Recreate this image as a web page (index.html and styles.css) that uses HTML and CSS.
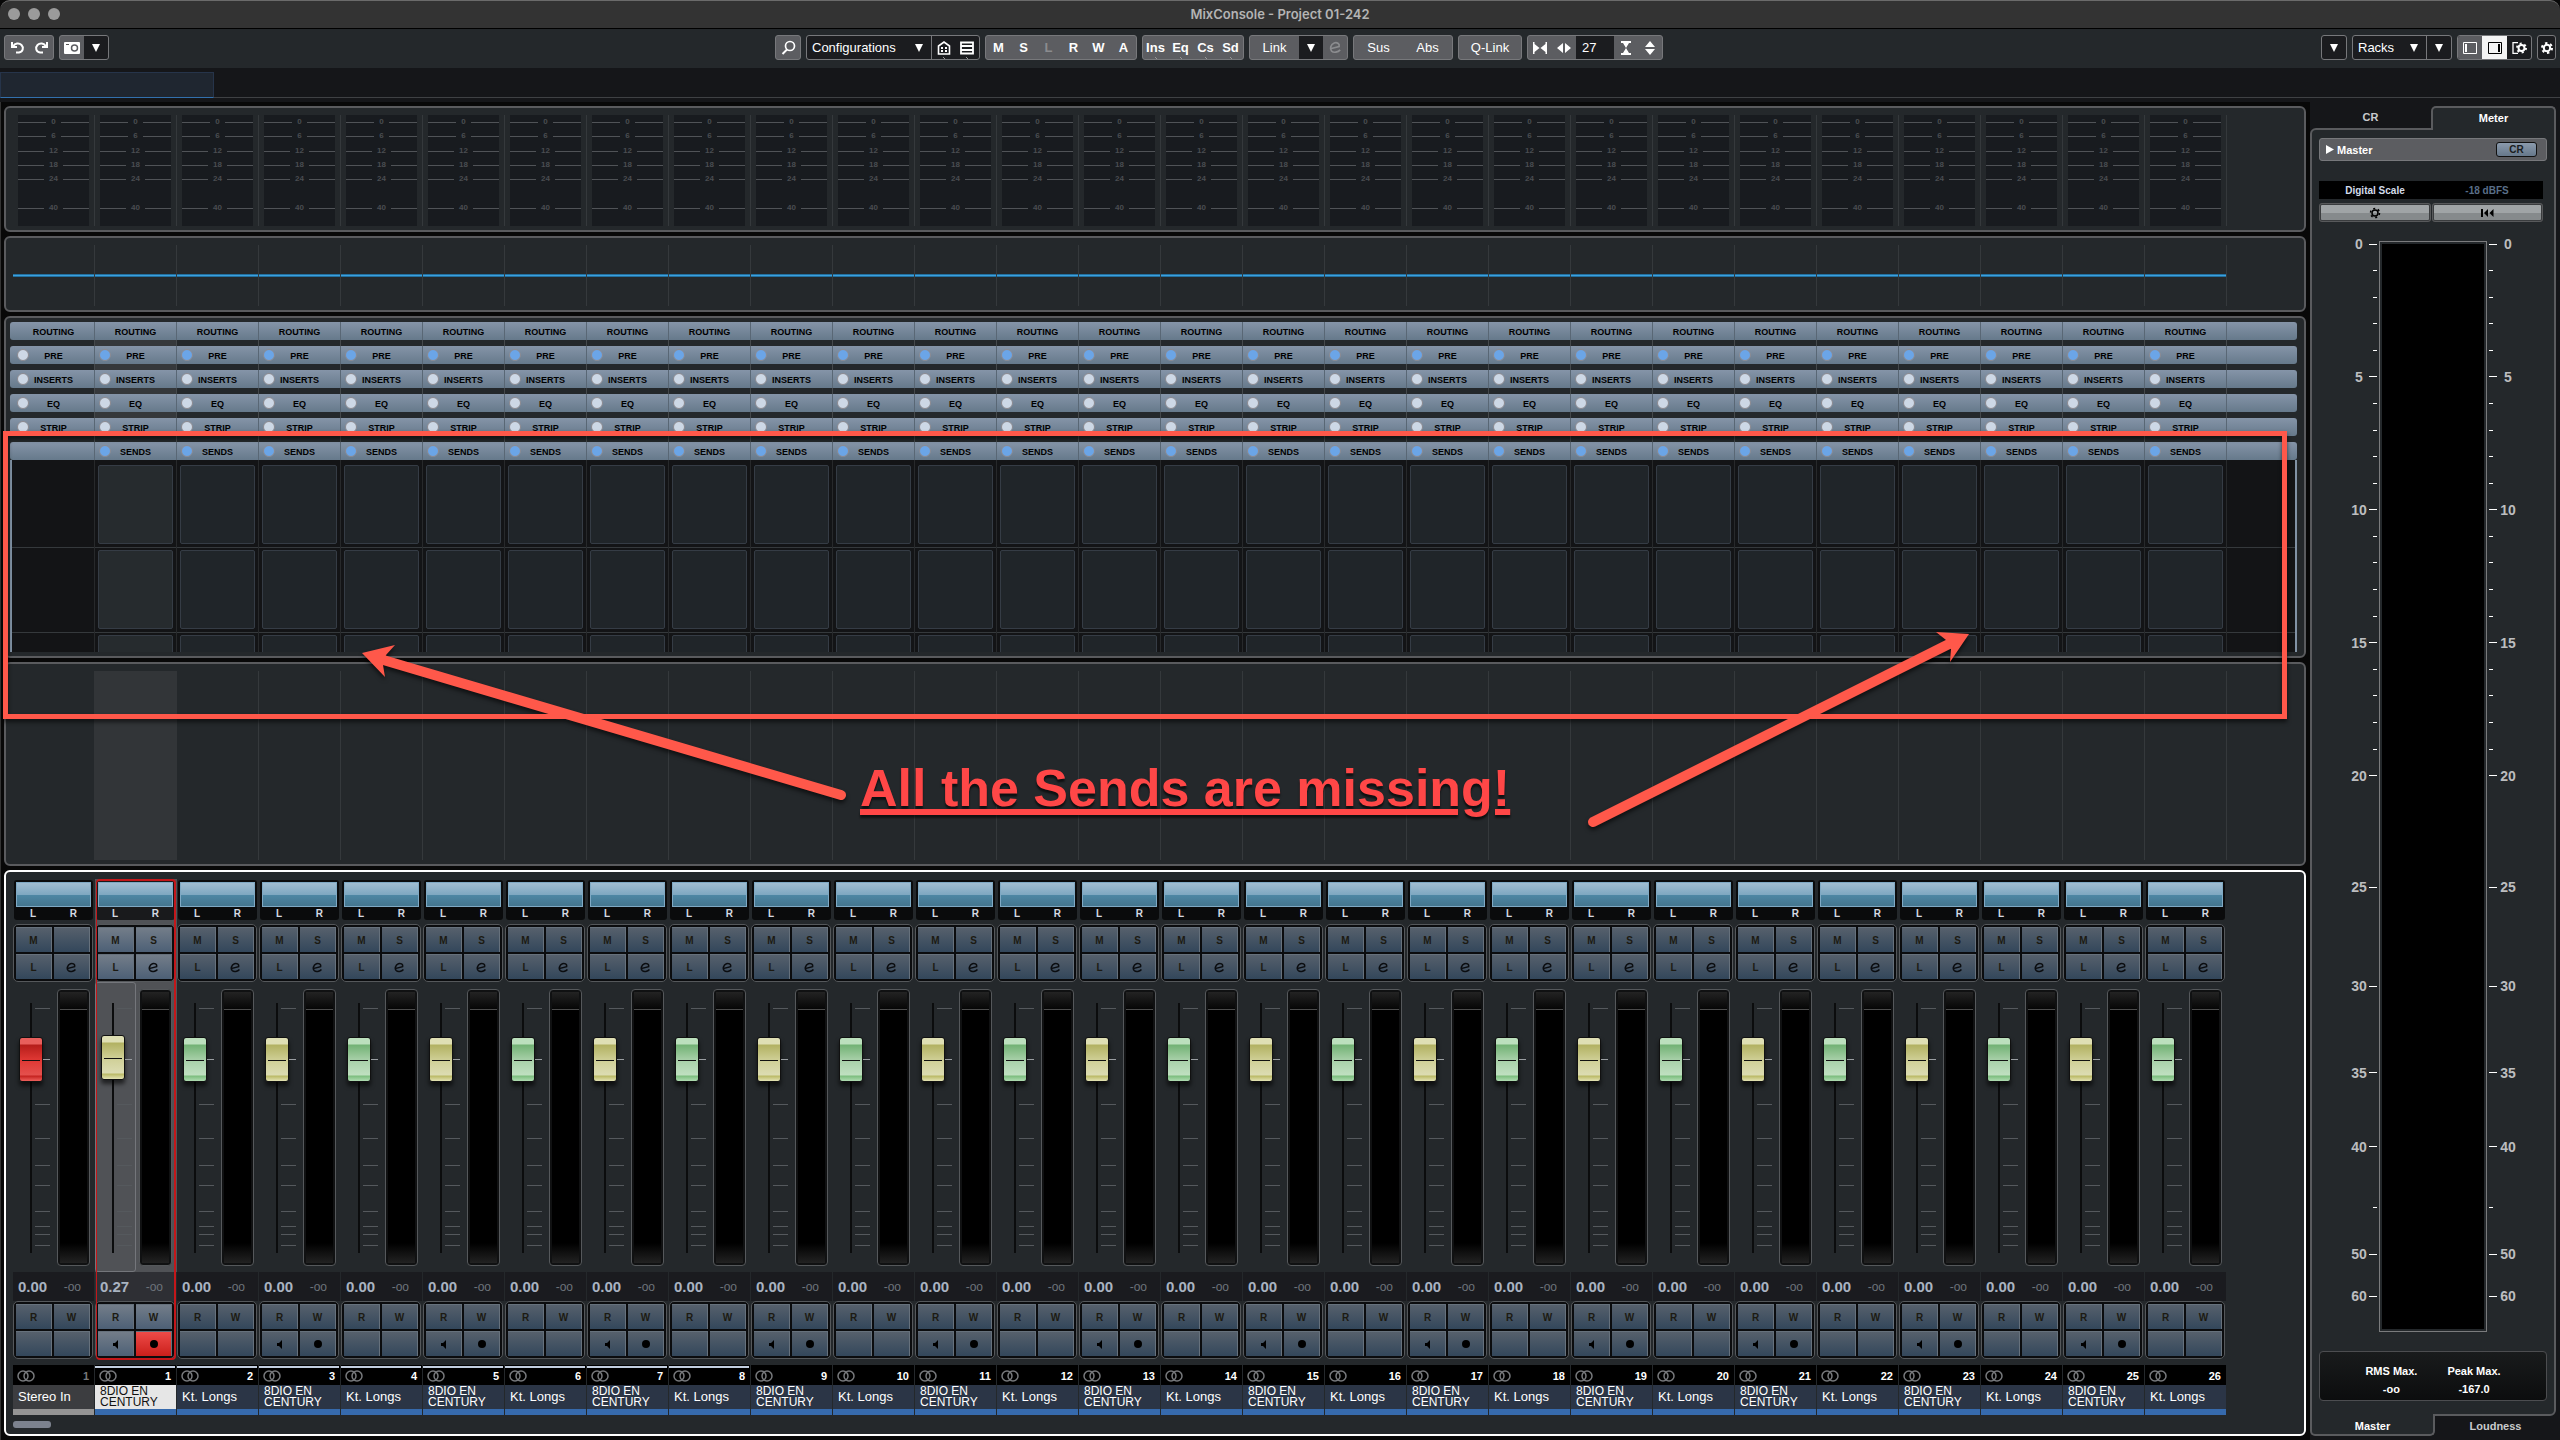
FILE: index.html
```
<!DOCTYPE html>
<html lang="en">
<head>
<meta charset="UTF-8">
<meta name="viewport" content="width=device-width, initial-scale=1.0">
<title>MixConsole - Project 01-242</title>
<link rel="stylesheet" href="styles.css">
</head>
<body>
<div class="window">
    <header class="titlebar">
        <div class="lights"><i></i><i></i><i></i></div>
        <h1>MixConsole - Project 01-242</h1>
    </header>

    <div class="toolbar">
        <div class="tools">
            <div class="group">
                <button class="w24" aria-label="Undo"><svg width="15" height="14" viewBox="0 0 15 14"><path d="M2 1v5h5M3 5.500C5 2 9 1.500 11.500 4S13 11 9 11.500H6" fill="none" stroke="#fff" stroke-width="2"/></svg></button>
                <button class="w24" aria-label="Redo"><svg width="15" height="14" viewBox="0 0 15 14"><path d="M13 1v5H8M12 5.500C10 2 6 1.500 3.500 4S2 11 6 11.500h3" fill="none" stroke="#fff" stroke-width="2"/></svg></button>
            </div>
            <div class="group">
                <button class="w24" aria-label="Snapshots"><svg width="16" height="12" viewBox="0 0 16 12"><rect width="16" height="12" rx="1" fill="#fff"/><rect x="2" y="2" width="3" height="1" fill="#555"/><circle cx="10.500" cy="6" r="3" fill="none" stroke="#5c5d61" stroke-width="1.500"/></svg></button>
                <button class="w24 dark" aria-label="Snapshot menu"><svg class="down" viewBox="0 0 8 8"><path d="M0 0h8L4 8z"/></svg></button>
            </div>
        </div>

        <div class="tools center">
            <div class="group">
                <button class="w24" aria-label="Find channel"><svg width="15" height="15" viewBox="0 0 15 15"><circle cx="9" cy="6" r="4.500" fill="none" stroke="#fff" stroke-width="1.700"/><path d="M6 9.500L1.500 14" stroke="#fff" stroke-width="2"/></svg></button>
            </div>
            <div class="group dark">
                <label class="drop w124">
                    <select aria-label="Configurations"><option>Configurations</option></select>
                    <svg class="down" viewBox="0 0 8 8"><path d="M0 0h8L4 8z"/></svg>
                </label>
                <button class="w24 split notch" aria-label="Channel types"><svg width="14" height="14" viewBox="0 0 14 14"><path d="M1.500 13V5L7 1l5.500 4v8z" fill="none" stroke="#fff" stroke-width="1.600"/><path d="M4 6h2v2H4zM8 6h2v2H8zM4 9h2v2H4zM8 9h2v2H8z" fill="#fff"/></svg></button>
                <button class="w24 notch" aria-label="Zones"><svg width="14" height="14" viewBox="0 0 14 14"><path d="M1 1.500h12v11H1zM1 5h12M1 9h12" fill="none" stroke="#fff" stroke-width="1.800"/></svg></button>
            </div>
            <div class="group bold">
                <button class="w25">M</button><button class="w25">S</button><button class="w25 off">L</button><button class="w25">R</button><button class="w25">W</button><button class="w25">A</button>
            </div>
            <div class="group bold">
                <button class="w25 notch">Ins</button><button class="w25 notch">Eq</button><button class="w25 notch">Cs</button><button class="w25 notch">Sd</button>
            </div>
            <div class="group">
                <button class="w49">Link</button>
                <button class="w24 dark" aria-label="Link options"><svg class="down" viewBox="0 0 8 8"><path d="M0 0h8L4 8z"/></svg></button>
                <button class="w24 off" aria-label="Suspend link"><svg width="13" height="13" viewBox="0 0 10 10"><path d="M1.800 5.800L7.800 4.200C8.400 2 6 .8 4 1.600 1.200 2.800.4 6 2 7.800 3.600 9.400 7 8.600 8.600 6.800" fill="none" stroke="#8b8c8f" stroke-width="1.300"/></svg></button>
            </div>
            <div class="group">
                <button class="w49">Sus</button><button class="w49">Abs</button>
            </div>
            <div class="group">
                <button class="w62">Q-Link</button>
            </div>
            <div class="group">
                <button class="w24" aria-label="Narrow channels"><svg width="14" height="12" viewBox="0 0 14 12"><path d="M0 0h1.500v2l5 4-5 4v2H0zM14 0h-1.500v2l-5 4 5 4v2H14z" fill="#fff"/></svg></button>
                <button class="w24" aria-label="Widen channels"><svg width="14" height="10" viewBox="0 0 14 10"><path d="M6 0v10L0 5zM8 0v10l6-5z" fill="#fff"/></svg></button>
                <input class="count" type="text" value="27" aria-label="Visible channels">
                <button class="w24" aria-label="Less height"><svg width="10" height="14" viewBox="0 0 10 14"><path d="M0 0h10v2H8L5 7 2 2H0zM0 14h10v-2H8L5 7l-3 5H0z" fill="#fff"/></svg></button>
                <button class="w24" aria-label="More height"><svg width="10" height="14" viewBox="0 0 10 14"><path d="M0 6h10L5 0zM0 8h10l-5 6z" fill="#fff"/></svg></button>
            </div>
        </div>

        <div class="tools">
            <div class="group dark">
                <button class="w24" aria-label="Functions menu"><svg class="down" viewBox="0 0 8 8"><path d="M0 0h8L4 8z"/></svg></button>
            </div>
            <div class="group dark">
                <label class="drop w73">
                    <select aria-label="Racks"><option>Racks</option></select>
                    <svg class="down" viewBox="0 0 8 8"><path d="M0 0h8L4 8z"/></svg>
                </label>
                <button class="w25 split" aria-label="Rack menu"><svg class="down" viewBox="0 0 8 8"><path d="M0 0h8L4 8z"/></svg></button>
            </div>
            <div class="group dark">
                <button class="w24 grey" aria-label="Left zone"><svg width="14" height="12" viewBox="0 0 14 12"><path d="M.5.5h13v11H.5z" fill="none" stroke="#fff"/><path d="M2 2h2v8H2z" fill="#fff"/></svg></button>
                <button class="w25 lit" aria-label="Right zone"><svg width="14" height="12" viewBox="0 0 14 12"><path d="M.5.5h13v11H.5z" fill="none" stroke="#000"/><path d="M10 2h2v8h-2z" fill="#000"/></svg></button>
                <button class="w24" aria-label="Window layout"><svg width="15" height="12" viewBox="0 0 15 12"><path d="M6 .5H1v11h5" fill="none" stroke="#fff" stroke-width="1.300"/><circle cx="9.500" cy="6" r="3" fill="none" stroke="#fff" stroke-width="2"/><circle cx="9.500" cy="6" r="4.500" fill="none" stroke="#fff" stroke-width="2" stroke-dasharray="2 2.710"/></svg></button>
            </div>
            <div class="group dark">
                <button class="w17" aria-label="Toolbar setup"><svg width="12" height="12" viewBox="0 0 12 12"><circle cx="6" cy="6" r="3.200" fill="none" stroke="#fff" stroke-width="2"/><circle cx="6" cy="6" r="5" fill="none" stroke="#fff" stroke-width="2" stroke-dasharray="2.400 2.836"/></svg></button>
            </div>
        </div>
    </div>

    <div class="overview"><div class="visible-range"></div></div>

    <main class="main">
        <div class="console">
            <section class="panel meters" id="meters"></section>
            <section class="panel curves"><div class="lanes" id="curves"></div></section>
            <section class="panel rack" id="rack"></section>
            <section class="panel pictures"><div class="lanes marked"></div></section>
            <section class="panel faders">
                <div class="channels" id="channels"></div>
                <div class="scroll"></div>
            </section>
        </div>

        <aside class="side">
            <div class="tabs">
                <button>CR</button><button class="active">Meter</button>
            </div>
            <div class="side-body">
                <div class="master">
                    <svg width="8" height="9" viewBox="0 0 8 9"><path d="M0 0l8 4.500L0 9z" fill="#fff"/></svg>
                    <span>Master</span>
                    <button>CR</button>
                </div>
                <div class="scale-info"><span>Digital Scale</span><span class="dim">-18 dBFS</span></div>
                <div class="scale-buttons">
                    <button aria-label="Meter settings"><svg width="12" height="12" viewBox="0 0 12 12"><circle cx="6" cy="6" r="3" fill="none" stroke="#000" stroke-width="1.500"/><circle cx="6" cy="6" r="4.500" fill="none" stroke="#000" stroke-width="1.500" stroke-dasharray="2 2.712"/></svg></button>
                    <button aria-label="Reset meter"><svg width="13" height="8" viewBox="0 0 13 8"><path d="M0 0h2v8H0zM7 0v8L3 4zM12.500 0v8l-4-4z"/></svg></button>
                </div>
                <div class="big-meter">
                    <div class="scale left" id="scaleLeft"></div>
                    <div class="bar"></div>
                    <div class="scale right" id="scaleRight"></div>
                </div>
                <dl class="stats">
                    <div><dt>RMS Max.</dt><dd>-oo</dd></div>
                    <div><dt>Peak Max.</dt><dd>-167.0</dd></div>
                </dl>
            </div>
            <div class="tabs bottom">
                <button class="active">Master</button><button>Loudness</button>
            </div>
        </aside>
    </main>

    <div class="notes">
        <svg viewBox="0 0 2560 1440">
            <rect x="5.500" y="433.500" width="2279" height="283" fill="none" stroke="#ff584a" stroke-width="5"/>
            <path d="M841 795L380 659" stroke="#ff584a" stroke-width="10" stroke-linecap="round"/>
            <path d="M362 653l33-8-9 10-3 10 2 12z" fill="#ff584a"/>
            <path d="M1593 822l356-178" stroke="#ff584a" stroke-width="10" stroke-linecap="round"/>
            <path d="M1969 634l-33-2 10 8 5 9-1 13z" fill="#ff584a"/>
        </svg>
        <p>All the Sends are missing!</p>
    </div>
</div>

<script src="script.js"></script>
</body>
</html>
```
FILE: styles.css
```
* {
    box-sizing: border-box;
}

body {
    margin: 0;
    background-color: #080808;
    color: #fff;
    font-family: "Liberation Sans", Arial, sans-serif;
    font-size: 13px;
}

button, input, select {
    margin: 0;
    padding: 0;
    border: none;
    background: none;
    color: inherit;
    font: inherit;
}

svg {
    display: block;
}

.window {
    position: relative;
    display: flex;
    flex-direction: column;
    height: 100vh;
    min-height: 1300px;
    overflow: hidden;
}

/* title bar */
.titlebar {
    display: flex;
    align-items: center;
    height: 29px;
    padding: 0 8px 2px;
    border-top: 1px solid #6b6b6b;
    border-bottom: 1px solid #000;
    border-radius: 10px 10px 0 0;
    background-color: #333;
}

.lights {
    display: flex;
    flex: 1;
    gap: 8px;
}

.lights i {
    width: 12px;
    height: 12px;
    border-radius: 50%;
    background-color: #9b9b9b;
}

.titlebar h1 {
    margin: 0;
    color: #b4b4b4;
    font: 600 13px/16px Inter, "Liberation Sans", sans-serif;
}

.titlebar::after {
    content: "";
    flex: 1;
}

/* toolbar */
.toolbar {
    display: flex;
    align-items: center;
    justify-content: space-between;
    height: 39px;
    padding: 0 4px 2px;
    background-color: #24282b;
}

.tools {
    display: flex;
    gap: 5px;
}

.center {
    padding-left: 8px;
}

.group {
    display: flex;
    height: 25px;
    overflow: hidden;
    border: 1px solid #77787b;
    border-radius: 3px;
    background-color: #5c5d61;
}

.group button {
    display: flex;
    align-items: center;
    justify-content: center;
}

.bold {
    font-weight: bold;
}

.w17 { width: 17px; }
.w24 { width: 24px; }
.w25 { width: 25px; }
.w49 { width: 49px; }
.w62 { width: 62px; }
.w73 { width: 73px; }
.w124 { width: 124px; }

.dark {
    background-color: #1b1c1f;
}

.group .grey {
    background-color: #5c5d61;
}

.group .lit {
    background-color: #f4f4f4;
}

.off {
    color: #8b8c8f;
}

.split {
    border-left: 1px solid #77787b;
}

.notch {
    background-image: linear-gradient(45deg, transparent 45%, #999 50%, transparent 55%);
    background-repeat: no-repeat;
    background-position: center bottom;
    background-size: 4px 2px;
}

.down {
    width: 8px;
    height: 8px;
    fill: #fff;
}

.drop {
    display: flex;
    align-items: center;
    padding: 0 8px 0 5px;
}

.drop select {
    flex: 1;
    min-width: 0;
    appearance: none;
}

.count {
    width: 38px;
    padding-left: 6px;
    background-color: #1b1c1f;
}

.overview {
    height: 34px;
    padding-top: 4px;
    background: linear-gradient(#3f4144, #3f4144) 0 29px / 100% 1px no-repeat #151619;
}

.visible-range {
    width: 214px;
    height: 26px;
    border: 1px solid #26344a;
    border-bottom-color: #3270ad;
    background-color: #1f2630;
}

/* console panels */
.main {
    display: flex;
    flex: 1;
    min-height: 0;
}

.console {
    display: flex;
    flex: 1;
    flex-direction: column;
    gap: 4px;
    min-width: 0;
    padding: 4px 4px 4px 3px;
    border-left: 1px solid #333;
}

.panel {
    overflow: hidden;
    border: 2px solid #5a5b5e;
    border-radius: 6px;
    background-color: #24282b;
}

.meters {
    display: flex;
    padding: 7px 7px 4px;
}

.mini-meter {
    flex: none;
    display: grid;
    grid-template-rows: 14px 14px 15px 14px 14px 29px 11px;
    width: 82px;
    height: 111px;
    padding-right: 5px;
    padding-left: 5px;
    border-right: 1px solid #35393c;
}

.mini-meter span {
    display: flex;
    align-items: flex-end;
    gap: 5px;
    padding-bottom: 1px;
    background-color: #181b1f;
    color: #4a4d51;
    font-weight: bold;
    font-size: 8px;
    line-height: 13px;
}

.mini-meter span:not(:empty)::before,
.mini-meter span:not(:empty)::after {
    content: "";
    flex: 1;
    height: 1px;
    margin-bottom: 5px;
    background-color: #505357;
}

.lanes {
    width: 2214px;
    background: repeating-linear-gradient(90deg, transparent 0 81px, #35393c 81px 82px);
}

.curves {
    padding: 7px 7px 4px;
}

.curves .lanes {
    display: flex;
    align-items: center;
    height: 61px;
}

.curves i {
    width: 81px;
    height: 3px;
    margin-right: 1px;
    border: solid #23709f;
    border-width: 1px 0;
    background-color: #3ba0de;
}

.rack {
    flex: none;
    padding: 4px 7px 4px 4px;
}

.rack-rows {
    display: grid;
    gap: 6px;
    background: linear-gradient(#35383b, #35383b) 85px 0 / 81px 100px no-repeat,
        repeating-linear-gradient(90deg, transparent 0 81px, #45494c 81px 82px) 3px 0 / 2214px 100% no-repeat;
}

.row {
    display: flex;
    height: 18px;
    padding-left: 3px;
    border-radius: 3px;
    background: linear-gradient(#8594a8, #66798b);
}

.slot {
    display: grid;
    flex: none;
    align-items: center;
    width: 82px;
    border-right: 1px solid #596775;
    color: #000;
    font-weight: bold;
    font-size: 9px;
}

.slot > * {
    grid-area: 1 / 1;
}

.slot span {
    padding-top: 1px;
    text-align: center;
}

.bypass {
    width: 12px;
    height: 12px;
    margin-left: 4px;
    border: 1px solid #8c8a90;
    border-radius: 50%;
    background-color: #cdd8e6;
}

.bypass.on {
    background-color: #6ba5e7;
}

.sends {
    display: flex;
    height: 192px;
    overflow: hidden;
    padding-left: 1px;
    border: solid #8192a5;
    border-width: 0 2px;
    background: linear-gradient(#35393c, #35393c) 0 87px / 100% 1px no-repeat,
        linear-gradient(#35393c, #35393c) 0 172px / 100% 1px no-repeat,
        #131416;
}

.send-col {
    flex: none;
    width: 82px;
    padding: 5px 3px;
    border-right: 1px solid #27292b;
}

.send-col button {
    display: block;
    width: 75px;
    height: 79px;
    margin-bottom: 6px;
    border: 1px solid #353c45;
    border-radius: 2px;
    background-color: #202529;
}

.send-col.selected button {
    background-color: #262b2e;
}

.pictures {
    flex: 1;
    padding: 7px 7px 4px;
}

.pictures .lanes {
    height: 100%;
}

.marked {
    background: linear-gradient(#323538, #323538) 81px 0 / 83px 100% no-repeat,
        repeating-linear-gradient(90deg, transparent 0 81px, #35393c 81px 82px);
}

/* fader section */
.faders {
    flex: none;
    padding: 7px 7px 6px;
    border-color: #fff;
}

.channels {
    display: flex;
    height: 536px;
}

.channel {
    position: relative;
    display: flex;
    flex: none;
    flex-direction: column;
    width: 82px;
}

.pan {
    height: 40px;
    margin: 1px 2px 4px 1px;
    padding: 2px;
    border-radius: 3px;
    background-color: #0a0b0c;
}

.pan-bar {
    height: 25px;
    border: 1px solid #7fa9c4;
    background: linear-gradient(#a0bdd2, #7fa8c1 50%, #4d86a3 54%, #44758e);
}

.pan-text {
    display: flex;
    justify-content: space-between;
    padding: 1px 14px 0;
    color: #d5dae2;
    font-weight: bold;
    font-size: 10px;
    line-height: 11px;
}

.pads {
    display: grid;
    grid-template-columns: 1fr 1fr;
    grid-template-rows: 1fr 1fr;
    gap: 2px;
    width: 80px;
    height: 58px;
    padding: 2px;
    border: 1px solid #55585b;
    border-radius: 5px;
    background-color: #0b0c0e;
}

.pads button {
    display: flex;
    align-items: center;
    justify-content: center;
    border: solid #66717c;
    border-width: 1px 1px 0 0;
    background: linear-gradient(#56606c, #33475b);
    color: #1c1a12;
    font-weight: bold;
    font-size: 10px;
}

.fader-area {
    display: flex;
    flex: 1;
    min-height: 0;
}

.fader {
    display: flex;
    width: 41px;
    padding: 21px 0 19px 6px;
}

.fader input {
    flex: none;
    width: 24px;
    height: 250px;
    appearance: none;
    writing-mode: vertical-lr;
    direction: rtl;
    background: linear-gradient(#0b0c0d, #0b0c0d) center / 2px 100% no-repeat;
}

.fader input::-webkit-slider-thumb {
    width: 24px;
    height: 45px;
    appearance: none;
    border: 1px solid #111;
    border-radius: 3px;
    box-shadow: 0 4px 4px rgba(0, 0, 0, 0.6);
    background: linear-gradient(#111, #111) center 22px / 18px 1px no-repeat,
        linear-gradient(#bce0bd 0 6px, #72b274 7px, #a8d0a9 22px, #bfe0c0 37px, #7bbd7d 38px, #b0dcb2);
}

.fader.gold input::-webkit-slider-thumb {
    background: linear-gradient(#111, #111) center 22px / 18px 1px no-repeat,
        linear-gradient(#dfdfb4 0 6px, #b2b161 7px, #cfcf96 22px, #dcdcb2 37px, #bab965 38px, #e3e3b4);
}

.fader.red input::-webkit-slider-thumb {
    background: linear-gradient(#111, #111) center 22px / 18px 1px no-repeat,
        linear-gradient(#e85f5c 0 6px, #b51d1a 7px, #e03834 22px, #e4504d 37px, #c3211e 38px, #ef605c);
}

.fader svg {
    flex: none;
    width: 7px;
    height: 250px;
    overflow: visible;
    fill: #55595d;
}

.fader .unity {
    fill: #9a9ea2;
}

.level {
    width: 33px;
    margin: 7px 0 6px 3px;
    padding: 2px;
    border: 1px solid #55585b;
    border-radius: 4px;
    background-color: #101112;
}

.level i {
    display: block;
    height: 100%;
    background: linear-gradient(#232323, #060606 17px, #4c4c4c 17px 18px, #000 18px, #000 calc(100% - 20px), #222);
}

.value {
    display: flex;
    align-items: center;
    justify-content: space-between;
    width: 81px;
    height: 29px;
    padding: 0 13px 0 5px;
    background-color: #1a1b1f;
    color: #a9b3c1;
    font-weight: bold;
    font-size: 15px;
}

.value small {
    color: #6d737a;
    font-weight: normal;
    font-size: 12px;
}

.strip-head {
    display: flex;
    align-items: center;
    justify-content: space-between;
    width: 81px;
    height: 20px;
    margin-top: 6px;
    padding: 0 5px 0 4px;
    border-top: 1px solid #000;
    background-color: #000;
    font-weight: bold;
    font-size: 11px;
}

.strip-head.linked {
    background: linear-gradient(#c3cfe0, #c3cfe0) 0 0 / 80px 2px no-repeat #000;
}

.strip-name {
    display: flex;
    align-items: center;
    width: 81px;
    height: 30px;
    padding: 0 0 2px 5px;
    border-bottom: 6px solid #366aad;
    background-color: #2b3546;
    font-size: 13px;
}

.strip-name.two {
    padding-bottom: 0;
    font-size: 12px;
    line-height: 11px;
}

.input .strip-head {
    color: #77797c;
}

.input .strip-name {
    border-color: #949494;
    background-color: #3c3d40;
}

.selected .pan {
    background-color: #191a1c;
}

.selected .pads button {
    background: linear-gradient(#737d89, #4d6076);
}

.selected .pads .armed {
    background: linear-gradient(#ee4b48, #cb1f1b);
}

.channel.selected {
    background: linear-gradient(#505256, #505256) 0 0 / 82px 393px no-repeat;
}

.channel.selected::after {
    content: "";
    position: absolute;
    inset: 0 1px 55px 1px;
    border: 2px solid #c3171a;
    border-left-width: 1px;
    border-radius: 4px;
    pointer-events: none;
}

.selected .fader {
    border: 1px solid #74767b;
    border-radius: 3px;
    padding: 20px 0 18px 5px;
}

.selected .value {
    background-color: #2e2f34;
}

.selected .strip-name {
    background-color: #e6e6e6;
    color: #111;
}

.scroll {
    width: 38px;
    height: 7px;
    margin-top: 6px;
    border-radius: 3px;
    background-color: #7c828e;
}

/* control room side */
.side {
    display: flex;
    flex-direction: column;
    width: 250px;
    padding: 4px 4px 4px 0;
    background-color: #151619;
    font-weight: bold;
    font-size: 11px;
}

.tabs {
    display: flex;
    height: 22px;
}

.tabs button {
    flex: 1;
    color: #c8cacc;
}

.tabs .active {
    z-index: 1;
    margin-bottom: -2px;
    padding-bottom: 2px;
    border: 2px solid #5a5b5e;
    border-bottom: none;
    border-radius: 5px 5px 0 0;
    background-color: #24282b;
    color: #fff;
}

.tabs.bottom {
    height: 20px;
}

.tabs.bottom .active {
    margin-top: -2px;
    margin-bottom: 0;
    padding-top: 4px;
    padding-bottom: 0;
    border-top: none;
    border-bottom: 2px solid #5a5b5e;
    border-radius: 0 0 5px 5px;
}

.side-body {
    display: flex;
    flex: 1;
    flex-direction: column;
    min-height: 0;
    padding: 8px 7px 13px;
    border: 2px solid #5a5b5e;
    border-radius: 6px 0 6px 0;
    background-color: #24282b;
}

.master {
    display: flex;
    align-items: center;
    gap: 3px;
    height: 23px;
    padding: 0 9px 0 6px;
    border: 1px solid #77787b;
    border-radius: 3px;
    background-color: #5c5d61;
}

.master span {
    flex: 1;
}

.master button {
    width: 41px;
    height: 15px;
    border: 1px solid #111;
    border-radius: 3px;
    background: linear-gradient(#8b9aac, #66788b);
    color: #1a1c20;
    font-size: 10px;
    line-height: 13px;
}

.scale-info {
    display: flex;
    height: 18px;
    margin: 20px 4px 4px 0;
    background-color: #000;
    color: #d3dcea;
    font-size: 10px;
    line-height: 19px;
    text-align: center;
}

.scale-info span {
    flex: 1;
}

.scale-info .dim {
    color: #5a6f88;
}

.scale-buttons {
    display: flex;
    gap: 1px;
    margin-right: 4px;
}

.scale-buttons button {
    display: flex;
    flex: 1;
    align-items: center;
    justify-content: center;
    height: 19px;
    border: 2px solid #3a3c3e;
    outline: 1px solid #58595b;
    outline-offset: -1px;
    border-radius: 3px;
    background: linear-gradient(#a0a4a6 50%, #868a8c 55%);
}

.big-meter {
    display: flex;
    flex: 1;
    min-height: 0;
    margin: 19px 0;
}

.bar {
    flex: none;
    width: 108px;
    border: 1px solid #7a7b7d;
    background-color: #000;
    box-shadow: inset 0 0 0 2px #24282b;
}

.scale {
    position: relative;
    flex: 1;
    margin: 3px 2px;
    color: #bcbdbf;
    font-size: 14px;
    line-height: 16px;
}

.mark {
    position: absolute;
    right: 0;
    display: flex;
    align-items: center;
    gap: 2px;
    height: 16px;
    margin-top: -8px;
}

.mark span {
    width: 16px;
    text-align: center;
}

.mark::after {
    content: "";
    width: 4px;
    height: 1px;
    background-color: #fff;
}

.mark.major::after {
    width: 8px;
}

.right .mark {
    right: auto;
    left: 0;
    flex-direction: row-reverse;
    gap: 3px;
}

.stats {
    display: flex;
    justify-content: center;
    gap: 30px;
    height: 50px;
    margin: 0;
    padding-top: 10px;
    border: 1px solid #4c4d50;
    border-radius: 4px;
    background: linear-gradient(#191b1c, #0c0d0e);
    line-height: 18px;
    text-align: center;
}

.stats dd {
    margin: 0;
}

/* marker drawing over the console */
.notes {
    position: absolute;
    inset: 0;
    pointer-events: none;
}

.notes svg {
    width: 100%;
    filter: drop-shadow(0 3px 2px rgba(0, 0, 0, 0.6));
}

.notes p {
    position: absolute;
    top: 758px;
    left: 860px;
    margin: 0;
    color: #ff4747;
    font-weight: bold;
    font-size: 52px;
    line-height: 60px;
    text-decoration: underline 6px;
    text-shadow: 0 3px 2px rgba(0, 0, 0, 0.6);
}
```
FILE: script.js
```
var COUNT = 27;
var channels = [];

for (var i = 0; i < COUNT; i++) {
    channels.push({
        number: i === 0 ? 1 : i,
        input: i === 0,
        selected: i === 1,
        // instrument tracks can be monitored and armed
        instrument: i % 2 === 1,
        linked: i > 0 && i < 9
    });
}

function repeat(fn) {
    return channels.map(fn).join('');
}

// meter bridge
document.getElementById('meters').innerHTML = repeat(function() {
    return '<div class="mini-meter"><span>0</span><span>6</span><span>12</span>' +
        '<span>18</span><span>24</span><span>40</span><span></span></div>';
});

document.getElementById('curves').innerHTML = repeat(function() {
    return '<i></i>';
});

// racks
function rackRow(name, light) {
    return '<div class="row">' + repeat(function(ch) {
        if (name === 'SENDS' && ch.input) {
            return '<div class="slot"></div>';
        }
        var on = light === 'blue' && !ch.input ? ' on' : '';
        var dot = light ? '<button class="bypass' + on + '" aria-label="Bypass"></button>' : '';
        return '<div class="slot">' + dot + '<span>' + name + '</span></div>';
    }) + '</div>';
}

document.getElementById('rack').innerHTML = '<div class="rack-rows">' +
    rackRow('ROUTING', '') + rackRow('PRE', 'blue') + rackRow('INSERTS', 'white') +
    rackRow('EQ', 'white') + rackRow('STRIP', 'white') + rackRow('SENDS', 'blue') +
    '</div><div class="sends">' + repeat(function(ch) {
        if (ch.input) {
            return '<div class="send-col"></div>';
        }
        var slot = '<button aria-label="Send slot"></button>';
        return '<div class="send-col' + (ch.selected ? ' selected' : '') + '">' + slot + slot + slot + '</div>';
    }) + '</div>';

// faders
var editIcon = '<svg width="11" height="11" viewBox="0 0 10 10"><path d="M1.800 5.800L7.800 4.200C8.400 2 6 .8 4 1.600 1.200 2.800.4 6 2 7.800 3.600 9.400 7 8.600 8.600 6.800" fill="none" stroke="#0b0d10" stroke-width="1.400"/></svg>';
var speakerIcon = '<svg width="5" height="9" viewBox="0 0 5 9"><path d="M0 3h2l3-3v9L2 6H0z"/></svg>';
var recordIcon = '<svg width="8" height="8" viewBox="0 0 8 8"><circle cx="4" cy="4" r="4"/></svg>';
var stereoIcon = '<svg width="18" height="12" viewBox="0 0 18 12"><g fill="none" stroke="#77797c" stroke-width="1.500"><circle cx="6" cy="6" r="5"/><circle cx="12" cy="6" r="5"/></g></svg>';

// the long ticks start left of the scale, next to the fader track
var ticks = [5, 101, 135, 162, 182, 208, 223, 231, 242].map(function(y) {
    return '<rect x="-8" y="' + y + '" width="15" height="1"/>';
}).join('') + '<rect class="unity" x="0" y="56" width="7" height="1"/>';

document.getElementById('channels').innerHTML = repeat(function(ch) {
    var cls = 'channel' + (ch.input ? ' input' : '') + (ch.selected ? ' selected' : '');
    var color = ch.input ? 'red' : ch.instrument ? 'gold' : 'green';
    var name = ch.input ? 'Stereo In' : ch.instrument ? '8DIO EN<br>CENTURY' : 'Kt. Longs';
    return '<div class="' + cls + '">' +
        '<div class="pan"><div class="pan-bar"></div><div class="pan-text"><span>L</span><span>R</span></div></div>' +
        '<div class="pads"><button>M</button><button>' + (ch.input ? '' : 'S') + '</button>' +
        '<button>L</button><button aria-label="Edit channel">' + editIcon + '</button></div>' +
        '<div class="fader-area"><div class="fader ' + color + '">' +
        '<input type="range" min="0" max="205" value="' + (ch.selected ? 173 : 171) + '" aria-label="Volume">' +
        '<svg viewBox="0 0 7 250">' + ticks + '</svg></div>' +
        '<div class="level"><i></i></div></div>' +
        '<div class="value"><span>' + (ch.selected ? '0.27' : '0.00') + '</span><small>-oo</small></div>' +
        '<div class="pads"><button>R</button><button>W</button>' +
        '<button aria-label="Monitor">' + (ch.instrument ? speakerIcon : '') + '</button>' +
        '<button aria-label="Record"' + (ch.selected ? ' class="armed"' : '') + '>' + (ch.instrument ? recordIcon : '') + '</button></div>' +
        '<div class="strip-head' + (ch.linked ? ' linked' : '') + '">' + stereoIcon + '<span>' + ch.number + '</span></div>' +
        '<div class="strip-name' + (ch.instrument ? ' two' : '') + '">' + name + '</div></div>';
});

// control room meter scale: dB value and its place along the bar in percent
var marks = [[0, 0], [5, 12.25], [10, 24.5], [15, 36.75], [20, 49], [25, 59.3], [30, 68.4], [35, 76.4], [40, 83.2], [50, 93.1], [60, 97]];
var html = marks.map(function(m) {
    return '<div class="mark major" style="top: ' + m[1] + '%"><span>' + m[0] + '</span></div>';
}).join('');

for (var db = 1; db < 20; db++) {
    if (db % 5) {
        html += '<div class="mark" style="top: ' + db * 2.45 + '%"></div>';
    }
}
html += '<div class="mark" style="top: 88.8%"></div>';

document.getElementById('scaleLeft').innerHTML = html;
document.getElementById('scaleRight').innerHTML = html;
```
